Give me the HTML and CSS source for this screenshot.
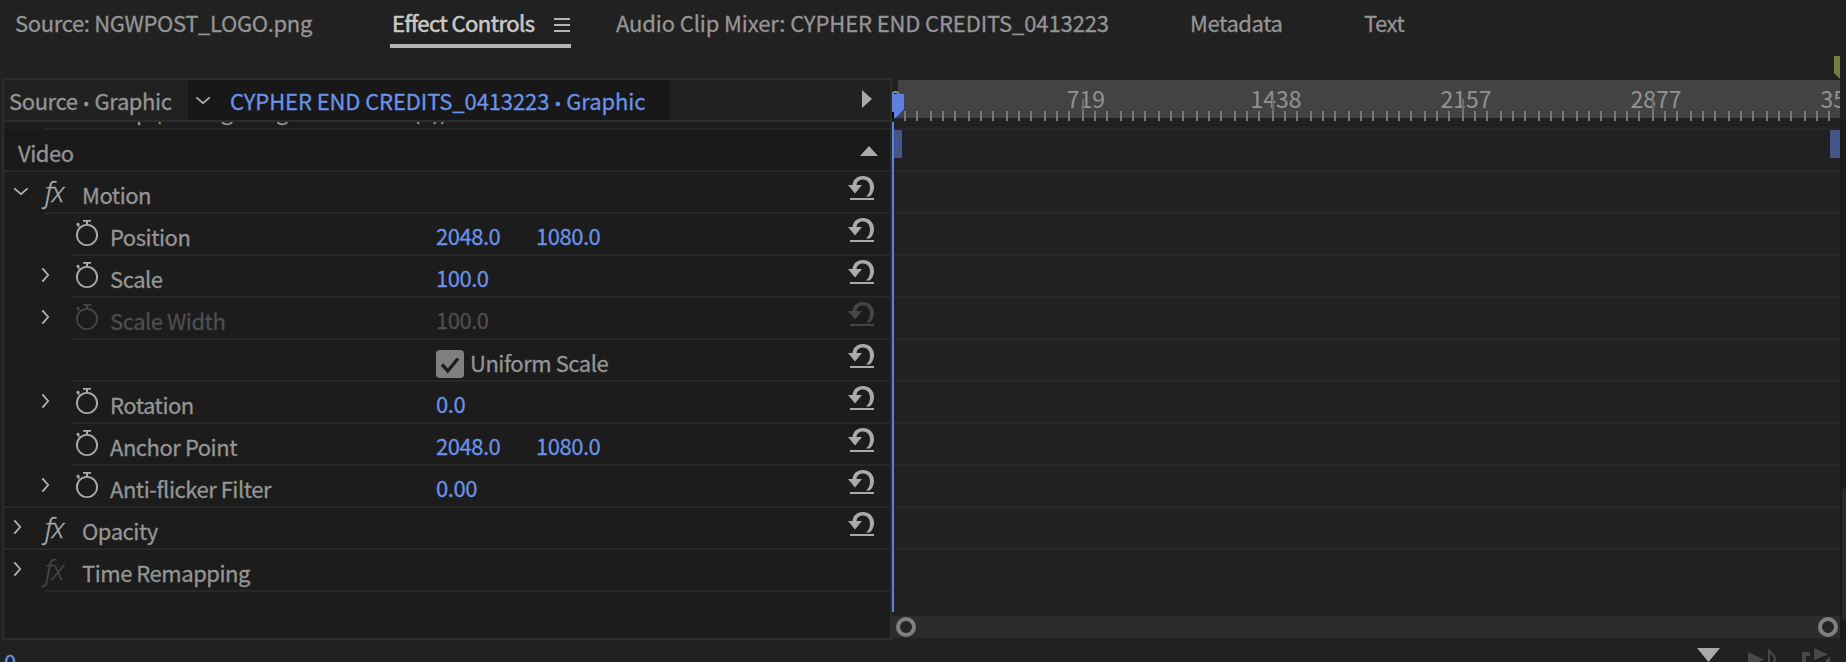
FILE: index.html
```html
<!DOCTYPE html>
<html lang="en">
<head>
<meta charset="utf-8">
<title>Effect Controls</title>
<link rel="stylesheet" href="styles.css">
</head>
<body>
<svg class="defs" aria-hidden="true">
  <symbol id="reset" viewBox="0 0 28 26">
    <path d="M1 10H15L8 18.500Z"/>
    <path d="M5.500 10.500C6 4.500 10 1 15.500 1C22.500 1 27 5.500 27 12C27 16 25 20 22.500 21.500H19C22 19 23 16 23 12.500C23 7.500 20 4.500 16 4.500C12 4.500 9.500 7 9.500 10.500Z"/>
    <rect x="3" y="23" width="24" height="2"/>
  </symbol>
  <symbol id="watch" viewBox="0 0 24 28">
    <circle cx="12" cy="16" r="10.100" fill="none" stroke="currentColor" stroke-width="1.900"/>
    <path d="M8 1H16V2.800H13V6H11V2.800H8ZM1 5.200L3 3.600L4.500 4.600V7.500L3 8.500L2.500 6.500Z"/>
  </symbol>
  <symbol id="right" viewBox="0 0 10 18"><path d="M1.500 1.500L8 9L1.500 16.500" fill="none" stroke="currentColor" stroke-width="2"/></symbol>
  <symbol id="down" viewBox="0 0 18 10"><path d="M1.500 1.500L9 8L16.500 1.500" fill="none" stroke="currentColor" stroke-width="2"/></symbol>
</svg>

<div class="app">
  <nav class="tabs">
    <span class="tab t-source">Source: NGWPOST_LOGO.png</span>
    <span class="tab active"><span class="t-effect">Effect Controls</span><i class="menu"></i></span>
    <span class="tab t-audio">Audio Clip Mixer: CYPHER END CREDITS_0413223</span>
    <span class="tab t-meta">Metadata</span>
    <span class="tab t-text">Text</span>
  </nav>

  <main class="work">
    <section class="panel">
      <header class="clip-head">
        <span class="src">Source<b>•</b>Graphic</span>
        <span class="seq"><svg class="down"><use href="#down"/></svg><span>CYPHER END CREDITS_0413223<b>•</b>Graphic</span></span>
        <svg class="play" viewBox="0 0 10 18"><path d="M0 0L10 9L0 18Z"/></svg>
      </header>
      <div class="peek"><span>Clip (Ending Long Credit 2048 (1))</span></div>
      <div class="row video"><span class="name">Video</span><svg class="up" viewBox="0 0 18 10"><path d="M0 10L9 0L18 10Z"/></svg></div>
      <div class="row group in1"><svg class="down"><use href="#down"/></svg><span class="fx">fx</span><span class="name">Motion</span><svg class="reset"><use href="#reset"/></svg></div>
      <div class="row prop"><svg class="watch"><use href="#watch"/></svg><span class="name">Position</span><span class="val">2048.0</span><span class="val">1080.0</span><svg class="reset"><use href="#reset"/></svg></div>
      <div class="row prop"><svg class="right"><use href="#right"/></svg><svg class="watch"><use href="#watch"/></svg><span class="name">Scale</span><span class="val">100.0</span><svg class="reset"><use href="#reset"/></svg></div>
      <div class="row prop off"><svg class="right"><use href="#right"/></svg><svg class="watch"><use href="#watch"/></svg><span class="name">Scale Width</span><span class="val">100.0</span><svg class="reset"><use href="#reset"/></svg></div>
      <div class="row prop"><span class="name"></span><span class="check"><svg viewBox="0 0 28 28"><path d="M6 14.500L11.800 21L22 8.500" fill="none" stroke="#1c1c1c" stroke-width="3.400"/></svg></span><span class="uniform">Uniform Scale</span><svg class="reset"><use href="#reset"/></svg></div>
      <div class="row prop"><svg class="right"><use href="#right"/></svg><svg class="watch"><use href="#watch"/></svg><span class="name">Rotation</span><span class="val">0.0</span><svg class="reset"><use href="#reset"/></svg></div>
      <div class="row prop"><svg class="watch"><use href="#watch"/></svg><span class="name">Anchor Point</span><span class="val">2048.0</span><span class="val">1080.0</span><svg class="reset"><use href="#reset"/></svg></div>
      <div class="row prop last"><svg class="right"><use href="#right"/></svg><svg class="watch"><use href="#watch"/></svg><span class="name">Anti-flicker Filter</span><span class="val">0.00</span><svg class="reset"><use href="#reset"/></svg></div>
      <div class="row group"><svg class="right"><use href="#right"/></svg><span class="fx">fx</span><span class="name">Opacity</span><svg class="reset"><use href="#reset"/></svg></div>
      <div class="row group in1"><svg class="right"><use href="#right"/></svg><span class="fx dim">fx</span><span class="name">Time Remapping</span></div>
    </section>

    <section class="timeline">
      <div class="ruler">
        <div class="scale">
          <span class="n0">0</span><span>719</span><span>1438</span><span>2157</span><span>2877</span><span>3596</span>
        </div>
        <svg class="ticks" width="948" height="42">
          <defs><pattern id="tick" width="38" height="42" patternUnits="userSpaceOnUse"><path d="M0 31h2v10h-2zM12 31h2v10h-2zM24 31h2v10h-2z" fill="#777"/></pattern></defs>
          <rect x="8" width="940" height="42" fill="url(#tick)"/>
          <path d="M190 19h2v12h-2zM380 19h2v12h-2zM570 19h2v12h-2zM760 19h2v12h-2z" fill="#6c6c6c"/>
          <path d="M0 32h2v6h-2z" fill="#000"/>
          <path d="M0 14H12V29L4 38H2V32H0Z" fill="#5f80e0"/>
        </svg>
      </div>
      <div class="lanes">
        <div class="lane short"></div>
        <div class="lane clip"><i></i><i></i></div>
        <div class="lane"></div><div class="lane"></div><div class="lane"></div><div class="lane"></div><div class="lane"></div>
        <div class="lane"></div><div class="lane"></div><div class="lane"></div><div class="lane"></div><div class="lane"></div>
        <div class="playhead"></div>
      </div>
      <div class="zoombar"><i></i><i></i></div>
    </section>

    <aside class="side"><div class="thumb"></div></aside>
  </main>

  <footer class="foot">
    <span class="time">0</span>
    <svg class="tools" width="146" height="22" viewBox="0 0 146 22">
      <path d="M0 8H23L11.500 22Z" fill="#aaa"/>
      <path d="M51 12L67 19.500L51 27Z" fill="#484848"/>
      <path d="M72 9V26M72 9.500C73 13 78 14.500 78 19C78 21 77 22 76 23" fill="none" stroke="#484848" stroke-width="2"/>
      <path d="M105 12H113V16H109V22H105ZM117 8L131 14.500L117 20ZM129 20L133 17V22H129Z" fill="#484848"/>
    </svg>
  </footer>
  <svg class="marker" width="6" height="22"><path d="M0 0H6V22H4V20H2V18H0Z"/></svg>
</div>
</body>
</html>
```

FILE: styles.css
```css
* { box-sizing: border-box; }
body {
  margin: 0;
  background: #212121;
  color: #959595;
  font: 22px/40px "Noto Sans CJK SC", "Noto Sans", sans-serif;
  letter-spacing: -.47px;
  -webkit-text-stroke: .3px;
  overflow: hidden;
}
svg { fill: currentColor; display: block; flex: none; }
.defs { position: absolute; width: 0; height: 0; }
.app { position: relative; width: 1846px; height: 662px; overflow: hidden; display: flex; flex-direction: column; white-space: nowrap; }

/* Tab bar */
.tabs { height: 78px; display: flex; align-items: flex-start; padding-left: 15px; }
.tab { height: 48px; line-height: 45px; }
.t-source { width: 375px; letter-spacing: -.35px; }
.active { width: 181px; margin-right: 45px; padding-left: 2px; display: flex; border-bottom: 4px solid #b4b4b4; color: #c8c8c8; }
.t-effect { width: 162px; letter-spacing: -.6px; -webkit-text-stroke-width: .6px; letter-spacing: -.55px; }
.active .t-effect { letter-spacing: -.55px; }
.menu { width: 16px; height: 14px; margin-top: 18px; border: solid #b4b4b4; border-width: 2px 0; background: linear-gradient(#b4b4b4, #b4b4b4) 0 4px / 16px 2px no-repeat; }
.t-audio { width: 574px; letter-spacing: -.12px; }
.t-meta { width: 174px; letter-spacing: -.4px; }

.work { display: flex; height: 562px; }

/* Effect list */
.panel { width: 890px; margin-left: 2px; height: 562px; border: 2px solid #2b2b2b; background: #1c1c1c; }
.clip-head { height: 42px; display: flex; border-bottom: 2px solid #2b2b2b; background: #212121; line-height: 40px; }
.clip-head b { font: 17px/20px "Noto Sans"; display: inline-block; width: 17px; text-align: center; }
.src { width: 184px; padding-left: 5px; letter-spacing: -.4px; }
.seq { width: 482px; background: #181818; color: #6a92e8; display: flex; letter-spacing: -.1px; }
.seq .down { margin: 16px 19px 0 7px; }
.play { width: 10px; height: 18px; margin: 10px 0 0 192px; color: #aaa; }
.down { width: 16px; height: 9px; color: #b4b4b4; }
.right { width: 9px; height: 16px; color: #b4b4b4; }
.peek { height: 8px; overflow: hidden; position: relative; display: flex; align-items: flex-end; padding-left: 106px; letter-spacing: -.1px; }
.peek::after { content: ""; position: absolute; left: 40px; right: 0; bottom: 0; height: 2px; background: #272727; }
.peek span { line-height: 40px; }
.row { height: 42px; display: flex; position: relative; line-height: 45px; border-bottom: 2px solid #272727; }
.video { background: #191919; padding-left: 14px; line-height: 44px; }
.video .name { width: 842px; }
.up { width: 18px; height: 10px; margin-top: 16px; color: #aaa; }
.prop { border: 0; padding-left: 71px; }
.prop::after, .in1::after { content: ""; position: absolute; left: 68px; right: 0; bottom: 0; height: 2px; background: #272727; }
.in1 { border: 0; }
.in1::after { left: 40px; }
.last::after { left: 0; }
.watch { width: 24px; height: 28px; margin-top: 5px; color: #aaa; }
.prop .right { margin: 11px 25px 0 -34px; }
.prop .name { width: 326px; margin-left: 11px; }
.prop .name:empty { margin-left: 35px; width: 326px; }
.val { color: #6a92e8; width: 100px; line-height: 43px; }
.check { width: 28px; height: 28px; margin: 10px 6px 0 0; border-radius: 4px; background: #808080; }
.reset { width: 28px; height: 26px; margin: 3px 15px 0 auto; color: #aaa; }
.off .name, .off .val { color: #4e4e4e; }
.off .watch, .off .reset { color: #454545; }
.group { padding-left: 9px; }
.group .right { margin: 11px 23px 0 0; }
.group .down { margin: 15px 16px 0 0; }
.fx { width: 37px; font: italic 300 27px/40px "Noto Sans", sans-serif; color: #aaa; letter-spacing: -1px; }
.fx.dim { color: #454545; }

/* Timeline */
.timeline { width: 948px; display: flex; flex-direction: column; }
.ruler { height: 44px; padding: 2px 0 0; position: relative; }
.scale { height: 38px; background: linear-gradient(#434343, #434343) 6px 0 no-repeat; overflow: hidden; color: #919191; font-size: 23px; line-height: 36px; display: flex; -webkit-text-stroke-width: .1px; letter-spacing: 0; }
.scale span { width: 190px; flex: none; text-align: center; }
.scale .n0 { width: 99px; text-align: left; text-indent: -3px; }
.ticks { position: absolute; left: 0; top: 2px; }
.lanes { height: 494px; position: relative; overflow: hidden; }
.lane { height: 42px; border-bottom: 2px solid #262626; }
.lane.short { height: 8px; }
.lane:nth-child(12) { border: 0; }
.clip { display: flex; justify-content: space-between; padding-left: 2px; }
.clip i { width: 8px; height: 28px; background: #42548a; }
.clip i + i { width: 10px; }
.playhead { position: absolute; left: 0; top: 0; width: 2px; height: 490px; background: #5f80e0; }
.zoombar { height: 22px; background: #2c2c2c; display: flex; justify-content: space-between; align-items: center; padding: 0 2px 0 4px; }
.zoombar i { width: 20px; height: 20px; border: 4px solid #808080; border-radius: 50%; background: #242424; }
.side { width: 6px; margin-top: 42px; background: #1b1b1b; height: 520px; padding: 368px 0 0 2px; }
.thumb { height: 132px; background: #2a2a2a; border-radius: 4px 0 0 4px; }

.foot { height: 22px; display: flex; justify-content: space-between; overflow: hidden; }
.time { color: #6a92e8; padding: 1px 0 0 4px; line-height: 40px; }
.tools { margin-right: 3px; }
.marker { position: absolute; left: 1834px; top: 56px; color: #70803c; }
```
